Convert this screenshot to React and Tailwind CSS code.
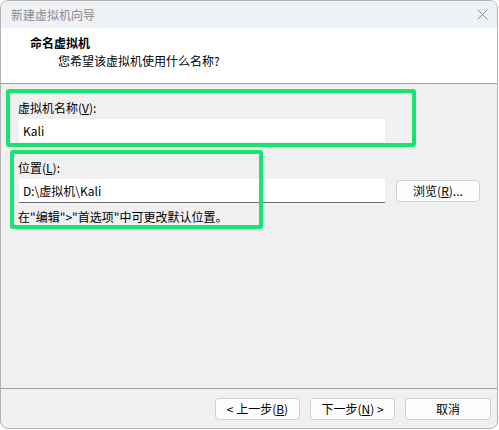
import React from 'react';

const font = { fontFamily: '"Noto Sans CJK SC", "Noto Sans", sans-serif' };

function Key({ children }) {
  return <span className="underline underline-offset-1">{children}</span>;
}

function Button({ children, className = '' }) {
  return (
    <button
      className={`h-[22px] rounded-[4px] border border-[#d0d0d0] bg-[#fdfdfd] text-[12px] leading-none text-black flex items-center justify-center ${className}`}
    >
      {children}
    </button>
  );
}

export default function App() {
  return (
    <div className="w-[499px] h-[430px] bg-white text-black" style={font}>
      <div className="relative w-[498px] h-[429px] border border-[#b4b4b4] rounded-[8px] overflow-hidden flex flex-col bg-[#f0f0f0]">
        {/* title bar */}
        <div className="h-[27px] bg-[#eef2f5] flex items-center justify-between pl-[10px] pr-[8px] shrink-0">
          <span className="text-[12px] text-[#8a8a8a]">新建虚拟机向导</span>
          <svg width="11" height="11" viewBox="0 0 11 11" className="mr-[1px]">
            <path d="M0.5 0.5 L10.5 10.5 M10.5 0.5 L0.5 10.5" stroke="#8c8c8c" strokeWidth="1" />
          </svg>
        </div>

        {/* header */}
        <div className="h-[56px] bg-white border-b border-[#a0a0a0] shrink-0 pt-[7px]">
          <div className="pl-[29px] text-[12px] font-bold leading-[16px]">命名虚拟机</div>
          <div className="pl-[57px] mt-[2px] text-[12px] leading-[16px]">
            您希望该虚拟机使用什么名称?
          </div>
        </div>

        {/* body */}
        <div className="flex-1 pl-[17px] pt-[16px]">
          <div className="text-[12px] leading-[16px]">
            虚拟机名称(<Key>V</Key>):
          </div>
          <div className="mt-[3px] w-[366px] h-[23px] bg-white flex items-center pl-[4px] text-[12px] ml-[1px]">
            Kali
          </div>

          <div className="mt-[18px] text-[12px] leading-[16px]">
            位置(<Key>L</Key>):
          </div>
          <div className="mt-[3px] flex items-center ml-[1px]">
            <div className="w-[366px] h-[24px] bg-white border-b border-[#6e6e6e] flex items-center pl-[4px] text-[12px]">
              D:\虚拟机\Kali
            </div>
            <Button className="ml-[11px] w-[84px]">
              浏览(<Key>R</Key>)...
            </Button>
          </div>
          <div className="mt-[6px] text-[12px] leading-[16px]">
            在"编辑"&gt;"首选项"中可更改默认位置。
          </div>
        </div>

        {/* footer */}
        <div className="h-[40px] border-t border-[#a0a0a0] shrink-0 flex justify-end items-start pt-[9px] pr-[6px] gap-[10px]">
          <Button className="w-[85px]">
            &lt; 上一步(<Key>B</Key>)
          </Button>
          <Button className="w-[85px]">
            下一步(<Key>N</Key>) &gt;
          </Button>
          <Button className="w-[86px]">取消</Button>
        </div>

        {/* annotation boxes */}
        <div className="absolute left-[5px] top-[88px] w-[410px] h-[58px] border-[4px] border-[#16e570] rounded-[3px]" />
        <div className="absolute left-[9px] top-[149px] w-[253px] h-[79px] border-[4px] border-[#16e570] rounded-[3px]" />
      </div>
    </div>
  );
}
